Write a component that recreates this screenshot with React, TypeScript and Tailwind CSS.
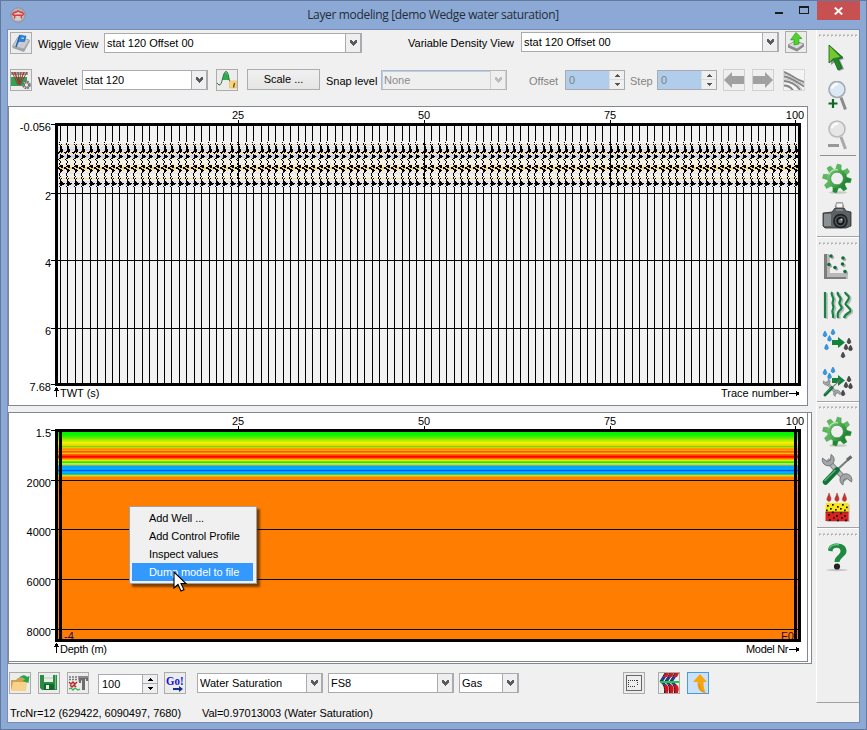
import React from "react";

const FONT = "'Liberation Sans', Arial, sans-serif";

/* ---------- small controls ---------- */

function Chevron({ muted = false }: { muted?: boolean }) {
  return (
    <svg width="9" height="7" viewBox="0 0 9 7" shapeRendering="crispEdges">
      <path d="M1 0h2v1h1v1h1v-1h1v-1h2v3h-1v1h-1v1h-1v1h-1v-1h-1v-1h-1v-1h-1z" fill={muted ? "#bdbdbd" : "#5a5a5a"} />
    </svg>
  );
}

function Combo({ text, className, muted = false }: { text: string; className: string; muted?: boolean }) {
  return (
    <div
      className={`flex h-5 shrink-0 items-stretch border ${muted ? "border-[#b4b6ba] bg-[#efefef] text-[#8a8a8a] shadow-[inset_1px_1px_0_#b5d0ee]" : "border-[#a9abb0] bg-white text-black"} ${className}`}
    >
      <span className="flex grow items-center whitespace-nowrap pl-[2px]">{text}</span>
      <span
        className={`flex w-4 items-center justify-center border border-y-0 ${muted ? "border-[#cfcfcf] bg-[#efefef]" : "border-[#a9abb0] bg-[#efefef]"}`}
      >
        <Chevron muted={muted} />
      </span>
    </div>
  );
}

function Spin({ text, className, muted = false }: { text: string; className: string; muted?: boolean }) {
  const tri = muted ? "#555" : "#000";
  return (
    <div className={`flex h-5 w-[60px] shrink-0 border border-[#a9abb0] ${muted ? "bg-[#b1cdec] text-[#808080]" : "bg-white text-black"} ${className}`}>
      <span className="flex grow items-center pl-[3px]">{text}</span>
      <span className={`flex w-[15px] flex-col border-l bg-[#efefef] ${muted ? "border-[#dcdcdc]" : "border-[#a9abb0]"}`}>
        <span className={`flex h-[9px] items-center justify-center border-b ${muted ? "border-[#dadada]" : "border-[#a9abb0]"}`}>
          <svg width="5" height="3" viewBox="0 0 5 3" shapeRendering="crispEdges"><path d="M2 0h1v1h1v1h1v1H0V2h1V1h1z" fill={tri} /></svg>
        </span>
        <span className="flex h-[9px] items-center justify-center">
          <svg width="5" height="3" viewBox="0 0 5 3" shapeRendering="crispEdges"><path d="M0 0h5v1H4v1H3v1H2V2H1V1H0z" fill={tri} /></svg>
        </span>
      </span>
    </div>
  );
}

function Tool({ className = "", children, tone = "border-[#acacac] bg-[#ececec]" }: { className?: string; children: React.ReactNode; tone?: string }) {
  return (
    <div className={`h-[22px] w-[22px] shrink-0 border ${tone} ${className}`}>
      <svg width="20" height="20" viewBox="1 1 20 20" className="block">{children}</svg>
    </div>
  );
}

function Label({ children, className = "" }: { children: React.ReactNode; className?: string }) {
  return <span className={`shrink-0 overflow-visible whitespace-nowrap leading-[14px] ${className}`}>{children}</span>;
}

/* ---------- title bar ---------- */

function TitleBar() {
  return (
    <div className="flex h-[28px] w-full shrink-0 items-start">
      <svg width="16" height="16" viewBox="0 0 16 16" className="ml-[9px] mt-[6px] shrink-0">
        <circle cx="8" cy="8" r="7.2" fill="#b9b3b4" stroke="#858a9c" strokeWidth=".8" />
        <circle cx="8" cy="9" r="4.500" fill="#d3cdcb" />
        <path d="M2 8 4 5.500 6.500 5 8 3.800 10 5 12.500 5.500 14 8M3 8.200H13M5 8l-.5 3.500M11 8l.5 3.500" fill="none" stroke="#dc3b3b" strokeWidth="1.400" />
      </svg>
      <div className="mt-[4px] w-[731px] shrink-0 pl-[83px] text-center text-[12px] leading-5 tracking-[-0.34px] text-[#252c38] [font-family:'Open_Sans','Noto_Sans',sans-serif]">
        <span className="whitespace-nowrap">Layer modeling [demo Wedge water saturation]</span>
      </div>
      <svg width="60" height="20" viewBox="757 1 60 20" className="shrink-0" shapeRendering="crispEdges">
        <path d="M775 12h8v2h-8z" fill="#1c1c1c" />
        <path d="M799 6h10v8h-10zM800 8v5h8V8z" fillRule="evenodd" fill="#1c1c1c" />
      </svg>
      <div className="flex h-[19px] w-[43px] shrink-0 items-center justify-center bg-[#c75050]">
        <svg width="9" height="8" viewBox="0 0 9 8"><path d="M.8.5 8.200 7.500M8.200.5.8 7.500" stroke="#fff" strokeWidth="1.900" /></svg>
      </div>
    </div>
  );
}

/* ---------- top tool rows ---------- */

function TopRows() {
  return (
    <>
      <div className="flex h-[38px] shrink-0 items-start">
        <Tool className="ml-[2px] mt-[2px]">
          <path d="M2.500 14 8 5l11.500 3L14 17z" fill="#c9ccd0" stroke="#9a9fa4" strokeWidth=".8" />
          <path d="M2.500 14v2l11.500 4 5.500-10V8L14 17z" fill="#9ea3a8" />
          <path d="M6 15 10 3" stroke="#1c63b0" strokeWidth="1.500" />
          <path d="M9.500 3.500c3-1 4 1 6.500.5L14.500 9.500c-2.500.5-4-1-6.500.5z" fill="#2c83dd" stroke="#1557a5" strokeWidth=".6" />
          <path d="M11.500 5.500h2.500v1.500h-2.500z" fill="#9fd3ff" />
        </Tool>
        <Label className="ml-[6px] mt-[7px] w-[66px]">Wiggle View</Label>
        <Combo className="mt-[3px] w-[258px]" text="stat 120 Offset 00" />
        <Label className="ml-[46px] mt-[6px] w-[113px]">Variable Density View</Label>
        <Combo className="mt-[2px] w-[258px]" text="stat 120 Offset 00" />
        <Tool className="ml-[6px] mt-[1px]">
          <path d="M3 14 10 10l9 3-7 5z" fill="#dcdcdc" stroke="#888" strokeWidth=".8" />
          <path d="M3 14v2.500l9 4 7-5V13l-7 5z" fill="#8a8a8a" />
          <path d="M11 1.500 17 7.500l-3.200.2.200 5.300-5 1V8.700L5.500 9z" fill="#4fd22b" stroke="#2e9d18" strokeWidth=".7" />
        </Tool>
      </div>
      <div className="flex h-[38px] shrink-0 items-start">
        <Tool className="ml-[2px] mt-[1px]">
          <path d="M1 3h17v3H1z" fill="#a89b93" />
          <path d="M1 8h16v9H1z" fill="#36a053" />
          <path d="M2 3 8 16M5 3l4 12M8 3l1 12M11 3 9 15M14 3 9 16M17 3 10 16" stroke="#7c3f36" strokeWidth=".9" />
          <path d="M4 3 9 15M14 3 9.500 15" stroke="#c22" strokeWidth=".8" />
          <circle cx="16.500" cy="16" r="3.400" fill="#ddd" stroke="#666" strokeWidth="1.700" strokeDasharray="1.700 1" />
          <circle cx="16.500" cy="16" r="2.200" fill="#e6e6e6" stroke="#707070" />
        </Tool>
        <Label className="ml-[6px] mt-[6px] w-[44px]">Wavelet</Label>
        <Combo className="mt-[2px] w-[126px]" text="stat 120" />
        <Tool className="ml-[8px] mt-[1px]">
          <path d="M6.500 11C8 1 11.500 1 13.500 11z" fill="#2eae4a" />
          <path d="M1 14 3 16C6.500 17 6.500 3 10 2.500 13 3 12.500 11 14 13" fill="none" stroke="#2c6b40" strokeWidth="1" />
          <path d="M13.500 12h7v7h-7z" fill="#fad47a" stroke="#e2b95b" strokeWidth=".6" />
          <path d="m18.500 14-1 4.500" stroke="#5c5026" strokeWidth="1.300" />
        </Tool>
        <div className="ml-[9px] mt-[1px] flex h-[21px] w-[73px] shrink-0 items-center justify-center border border-[#acacac] bg-gradient-to-b from-[#f0f0f0] to-[#e5e5e5]">
          Scale ...
        </div>
        <Label className="ml-[6px] mt-[6px] w-[55px]">Snap level</Label>
        <Combo muted className="mt-[2px] w-[126px]" text="None" />
        <Label className="ml-[22px] mt-[6px] w-[36px] text-[#838383]">Offset</Label>
        <Spin muted className="mt-[2px]" text="0" />
        <Label className="ml-[5px] mt-[6px] w-[27px] text-[#838383]">Step</Label>
        <Spin muted className="mt-[2px]" text="0" />
        <Tool className="ml-[6px] mt-[1px]" tone="border-[#d0d0d0] bg-[#efefef]">
          <path d="M1 11 9 3v4h12v8H9v4z" fill="#a0a0a0" />
        </Tool>
        <Tool className="ml-[7px] mt-[1px]" tone="border-[#d0d0d0] bg-[#efefef]">
          <path d="M21 11 13 3v4H1v8h12v4z" fill="#a0a0a0" />
        </Tool>
        <Tool className="ml-[9px] mt-[1px]" tone="border-[#d8d8d8] bg-[#f4f4f4]">
          <path d="M1 3C7 5 14 11 21 13M1 7.500C7 7.500 15 14 21 17.500M1 12c6 0 13 4 16 9M1 16.500c4 0 7 2 9 5" fill="none" stroke="#858585" strokeWidth="1.900" />
          <path d="M1 5.300C8 6 15 13 21 15.300M1 10c7 0 14 4 18 11" fill="none" stroke="#b0b0b0" strokeWidth=".9" />
        </Tool>
      </div>
    </>
  );
}

/* ---------- charts ---------- */

const traceX = Array.from({ length: 100 }, (_, i) => Math.round(60 + i * 7.426));
const numberedTraces = [
  { n: "25", x: 238 },
  { n: "50", x: 424 },
  { n: "75", x: 610 },
  { n: "100", x: 795 },
];

// y, height, colour of the density display behind the wiggles
const densityBands: [number, number, string][] = [
  [144, 1, "#f6e3ac"], [145, 2, "#ececf0"], [147, 1, "#dedee8"], [148, 1, "#eaeaee"], [149, 2, "#d9dae6"], [151, 1, "#f0e8dc"],
  [152, 1, "#f5d49a"], [153, 1, "#fae3b2"], [154, 1, "#e3e2e8"], [155, 1, "#d3d4e0"], [156, 2, "#cfd0e0"], [158, 1, "#e9e9ee"],
  [159, 1, "#f6ebc8"], [160, 4, "#f5f1e6"], [164, 1, "#f4e9c4"], [165, 1, "#eeeef0"], [166, 1, "#f6eccb"], [167, 2, "#fbd65a"],
  [169, 1, "#f1e4c8"], [170, 3, "#f0ebe4"], [173, 1, "#e6e6ec"], [174, 3, "#f4f0ea"], [177, 1, "#f5edd8"], [178, 1, "#f8e09a"],
  [179, 2, "#f1ecea"], [181, 1, "#dcdde8"], [182, 2, "#e5e6ef"], [184, 1, "#d6d8e6"], [185, 3, "#eceaec"],
];

// offset, y, width of each black pixel run in one seismic trace
const wiggle: [number, number, number][] = [
  [0, 141, 1], [-1, 143, 1], [-1, 144, 1], [1, 144, 1], [0, 145, 1], [0, 146, 2], [0, 147, 2], [0, 148, 2], [0, 149, 3], [0, 150, 3],
  [-1, 151, 4], [-3, 152, 3], [1, 152, 1], [-2, 153, 1], [0, 154, 1], [0, 155, 3], [0, 156, 4], [0, 157, 3], [-1, 158, 2], [-2, 159, 1],
  [-1, 160, 1], [0, 161, 1], [0, 162, 1], [-1, 163, 1], [-1, 164, 1], [0, 165, 3], [-1, 166, 4], [-3, 167, 2], [1, 167, 2], [-3, 168, 3],
  [-1, 169, 3], [0, 170, 3], [0, 171, 2], [0, 172, 1], [-1, 173, 1], [-1, 174, 1], [-1, 175, 1], [0, 176, 1], [-1, 177, 1], [-1, 178, 1],
  [1, 178, 1], [0, 179, 1], [0, 180, 1], [0, 181, 2], [0, 182, 3], [-1, 183, 6], [0, 184, 4], [0, 185, 2], [-1, 186, 1], [0, 187, 1],
];

function TraceNumbers({ y }: { y: number }) {
  return (
    <>
      {numberedTraces.map((t) => (
        <React.Fragment key={t.n}>
          <text x={t.x} y={y} textAnchor="middle">{t.n}</text>
          <rect x={t.x} y={y + 1} width="1" height="5" />
        </React.Fragment>
      ))}
    </>
  );
}

function SeismicChart() {
  return (
    <svg width="798" height="298" viewBox="9 107 798 298" className="block" fontFamily={FONT} fontSize="11" shapeRendering="crispEdges">
      <rect x="55" y="123" width="746" height="263" fill="#000" />
      <rect x="58" y="126" width="740" height="257" fill="#f2f2f2" />
      {densityBands.map(([y, h, c]) => <rect key={y} x="58" y={y} width="740" height={h} fill={c} />)}
      {traceX.map((x, i) => (
        <React.Fragment key={x}>
          <rect x={x} y="126" width="1" height="15" />
          <rect x={x} y="188" width="1" height="195" />
          {wiggle.map(([dx, y, w], k) => {
            const right = Math.min(x + dx + w, 798);
            const left = Math.max(x + dx, 58);
            return right > left ? <rect key={k} x={left} y={y - (i % 2 === 0 && k < 2 ? 1 : 0)} width={right - left} height="1" /> : null;
          })}
        </React.Fragment>
      ))}
      {[193, 260, 328].map((y) => <rect key={y} x="51" y={y} width="747" height="1" />)}
      <rect x="51" y="124" width="5" height="1" />
      <rect x="51" y="384" width="5" height="1" />
      <rect x="238" y="126" width="1" height="257" />
      <rect x="424" y="126" width="1" height="257" />
      <rect x="610" y="126" width="1" height="257" />
      <g textAnchor="end">
        <text x="51" y="131">-0.056</text>
        <text x="51" y="200">2</text>
        <text x="51" y="267">4</text>
        <text x="51" y="335">6</text>
        <text x="51" y="391">7.68</text>
      </g>
      <TraceNumbers y={119} />
      <path d="M56 387h1v1h1v2h1v1h-2v6h-1v-6h-2v-1h1v-2h1z" />
      <text x="60" y="397">TWT (s)</text>
      <text x="789" y="397" textAnchor="end">Trace number</text>
      <path d="M789 393h7v-2h1v1h2v3h-2v1h-1v-2h-7z" />
    </svg>
  );
}

// one colour per pixel row, starting under the upper frame line
const layerRows = [
  "#00f400", "#00f800", "#0cf400", "#22f000", "#3cee00", "#58ea00", "#78ea00", "#98ec00", "#aeee00", "#c4f200", "#e6f400",
  "#f8e800", "#d8e400", "#f4d400", "#40f000", "#f8c000", "#ffa000", "#ff8c00", "#ffa800", "#ff5800", "#ff7800", "#ffc400",
  "#ff6000", "#ff4000", "#ff0000", "#ff1800", "#ff7000", "#ffa800", "#e0f000", "#60e800", "#10e850", "#d0f000", "#ffc800",
  "#30c8c0", "#00a8ff", "#00a0ff", "#00b0ff", "#00a0ff", "#0050f0", "#00a0ff", "#00b4ff", "#00a8f0", "#18d090", "#d8e000", "#ffa800",
];

function LayerChart() {
  return (
    <svg width="798" height="248" viewBox="9 413 798 248" className="block" fontFamily={FONT} fontSize="11" shapeRendering="crispEdges">
      <rect x="55" y="429" width="746" height="213" fill="#000" />
      <rect x="58" y="432" width="740" height="207" fill="#ff7d00" />
      {layerRows.map((c, i) => <rect key={i} x="58" y={432 + i} width="740" height="1" fill={c} />)}
      {[480, 529, 579, 629].map((y) => <rect key={y} x="51" y={y} width="747" height="1" />)}
      <rect x="51" y="430" width="5" height="1" />
      <rect x="59" y="430" width="3" height="210" />
      <rect x="794" y="430" width="3" height="210" />
      <clipPath id="depthClip"><rect x="58" y="625" width="739" height="14" /></clipPath>
      <g clipPath="url(#depthClip)" fill="#280a50">
        <text x="58" y="640">1-4</text>
        <text x="781" y="640">F03</text>
      </g>
      <g textAnchor="end">
        <text x="51" y="437">1.5</text>
        <text x="51" y="487">2000</text>
        <text x="51" y="536">4000</text>
        <text x="51" y="586">6000</text>
        <text x="51" y="636">8000</text>
      </g>
      <TraceNumbers y={425} />
      <path d="M56 643h1v1h1v2h1v1h-2v6h-1v-6h-2v-1h1v-2h1z" />
      <text x="60" y="653" textLength="47">Depth (m)</text>
      <text x="746" y="653" textLength="42.500">Model Nr</text>
      <path d="M789 649h7v-2h1v1h2v3h-2v1h-1v-2h-7z" />
    </svg>
  );
}

function ContextMenu() {
  return (
    <div className="absolute left-[120px] top-[93px] w-[128px] border border-[#a0a0a0] bg-[#f0f0f0] py-[2px] pl-[2px] pr-[3px] tracking-[-0.08px] shadow-[3px_3px_2px_rgba(60,30,0,0.65)]">
      {["Add Well ...", "Add Control Profile", "Inspect values"].map((t) => (
        <div key={t} className="h-[18px] whitespace-nowrap pl-[17px] leading-[18px]">{t}</div>
      ))}
      <div className="h-[18px] whitespace-nowrap bg-[#3399ff] pl-[17px] leading-[18px] text-white">Dump model to file</div>
      <svg width="14" height="22" viewBox="0 0 14 22" className="absolute left-[43px] top-[64px]">
        <path d="M1 1v16l4-3.500 3 6.500 3-1.300-3-6.200h5z" fill="#fff" stroke="#000" strokeWidth="1.100" />
      </svg>
    </div>
  );
}

/* ---------- bottom rows ---------- */

function BottomRows() {
  return (
    <>
      <div className="mt-[8px] flex h-[30px] shrink-0 items-start">
        <Tool className="ml-[1px]">
          <path d="M2 8h5l2-2h7v11H2z" fill="#d3a052" />
          <path d="M2 19 4 10h14l-1 9z" fill="#f8d18a" />
          <path d="M10 6c3-4 7-3 8-1l2.500-1-1 7-6-2 2.500-1.500c-1-2-3-2-6-1.500z" fill="#26a548" />
        </Tool>
        <Tool className="ml-[7px]">
          <path d="M2 3h17v15H4l-2-2z" fill="#2b8a43" />
          <path d="M6 3h9v7H6z" fill="#e9eee9" />
          <path d="M6 6h9" stroke="#b9c9bb" />
          <path d="M6 12h10v6H6z" fill="#15662d" />
          <path d="M8 13h3v4H8z" fill="#e5eee7" />
          <path d="M17 3h1v14h-1z" fill="#70c184" />
        </Tool>
        <Tool className="ml-[7px]">
          <path d="M2 5h9M2 7.500h9" stroke="#777" strokeWidth="1.500" strokeDasharray="2 1" />
          <path d="m2 10 2 2 2-2 2 2 2-2M3 13l2 2 2-2 2 2" fill="none" stroke="#c22626" strokeWidth="1.500" />
          <path d="m2 17 2-1 2 2 2-2 3 2 2-1" fill="none" stroke="#3fae5b" strokeWidth="1.300" />
          <path d="M11 4h10v5h-2V7h-1v11h-3V9l-1-1v3h-2z" fill="#6d6d6d" />
          <path d="M11 5h10" stroke="#a8a8a8" />
        </Tool>
        <Spin className="ml-[9px] mt-[2px]" text="100" />
        <div className="ml-[6px] h-[22px] w-[22px] shrink-0 border border-[#acacac] bg-[#ececec]">
          <svg width="20" height="20" viewBox="1 1 20 20" className="block">
            <text x="2" y="13" fontSize="11.500" fontWeight="bold" fill="#1414dc" fontFamily="'Liberation Serif', serif" textLength="17.500" lengthAdjust="spacingAndGlyphs">Go!</text>
            <path d="M9 16h6v-2l4 3-4 3v-2H9z" fill="#142e8c" />
          </svg>
        </div>
        <Combo className="ml-[11px] mt-[1px] w-[126px]" text="Water Saturation" />
        <Combo className="ml-[5px] mt-[1px] w-[126px]" text="FS8" />
        <Combo className="ml-[5px] mt-[1px] w-[60px]" text="Gas" />
        <Tool className="ml-[104px]">
          <rect x="3.500" y="3.500" width="15" height="15" fill="#eee" stroke="#666" />
          <path d="M5.500 8v6M14.500 8v6M5 8.500h10M5 14.500h7" fill="none" stroke="#333" strokeDasharray="1 1" shapeRendering="crispEdges" />
        </Tool>
        <Tool className="ml-[13px]">
          <rect x="1" y="1" width="20" height="20" fill="#e8efe8" />
          {[0, 5, 10].map((o) => (
            <React.Fragment key={o}>
              <path d={`M${o + 7} 1h4l-2 4h-4z`} fill="#d8191e" />
              <path d={`M${o + 5} 5h3l-3 4.500 4 3.500h-3l-4-3.500z`} fill="#2038a8" />
              <path d={`M${o + 5} 13h4c2.500 3 1.500 5 1 8h-4c1-3 1-5-1-8z`} fill="#e01218" />
              <path d={`M${o + 7} 1 ${o + 2} 9.500c4 3 5 6 4.500 11.500`} fill="none" stroke="#101030" strokeWidth=".9" />
            </React.Fragment>
          ))}
          <path d="M2 9h19v2H2z" fill="#22cc35" />
        </Tool>
        <Tool className="ml-[7px]" tone="border-[#4a98e4] bg-[#c9e2fa]">
          <path d="M13 2 20 10h-3.500c0 4 .5 8 2.500 11-6-.5-9-4-8.500-11H6z" fill="#f6a511" />
          <path d="M12 12c0 4 2 7 5 8" fill="none" stroke="#df8a09" strokeWidth="1" />
        </Tool>
      </div>
      <div className="flex shrink-0 pl-[2px] pt-[4px] leading-[14px] tracking-[-0.04px]">
        <span className="w-[192px] shrink-0 whitespace-nowrap">TrcNr=12 (629422, 6090497, 7680)</span>
        <span className="whitespace-nowrap">Val=0.97013003 (Water Saturation)</span>
      </div>
    </>
  );
}

/* ---------- right tool bar ---------- */

function Slot({ className = "h-[38px]", children }: { className?: string; children: React.ReactNode }) {
  return (
    <div className={`flex shrink-0 items-center justify-start pl-[4px] ${className}`}>
      <svg width="32" height="32" viewBox="0 0 32 32">{children}</svg>
    </div>
  );
}

function Grip({ className = "h-[9px]" }: { className?: string }) {
  return (
    <div className={`flex shrink-0 justify-center pt-[4px] ${className}`}>
      <svg width="40" height="3" viewBox="0 0 40 3">
        <path d="M1 1.500h39" stroke="#b3b3b3" strokeWidth="2" strokeDasharray="2 2" />
        <path d="M2 2.500h38" stroke="#fff" strokeWidth="1" strokeDasharray="1 3" />
      </svg>
    </div>
  );
}

function Rule() {
  return <div className="h-[2px] w-full shrink-0 border-b border-t border-b-white border-t-[#a3a3a3]" />;
}

function Gear() {
  return (
    <>
      <ellipse cx="17" cy="29.500" rx="9" ry="1.300" fill="#c4cdc4" />
      <defs>
        <linearGradient id="gearShade" gradientUnits="userSpaceOnUse" x1="3" y1="4" x2="29" y2="20">
          <stop offset="0" stopColor="#8ed486" /><stop offset=".5" stopColor="#4fae53" /><stop offset="1" stopColor="#147428" />
        </linearGradient>
      </defs>
      <mask id="gearHole"><rect width="32" height="32" fill="#fff" /><circle cx="16" cy="15.500" r="6.300" fill="#000" /></mask>
      <g mask="url(#gearHole)">
        {[10, 55, 100, 145, 190, 235, 280, 325].map((a) => (
          <path
            key={a}
            d="M13 7 13.800 1.200 17.800 1.500 18.600 7z"
            transform={`rotate(${a} 16 15.500)`}
            fill={a > 60 && a < 200 ? "#1f8633" : "#5cb85c"}
            stroke="#3c9447"
            strokeWidth=".4"
          />
        ))}
        <circle cx="16" cy="15.500" r="10" fill="url(#gearShade)" />
      </g>
      <circle cx="16" cy="15.500" r="6.300" fill="none" stroke="#2e8840" strokeWidth=".6" />
      <path d="M7.500 12A9 9 0 0 1 17 6.800" fill="none" stroke="#b9eab0" strokeWidth="1.200" />
    </>
  );
}

function Lens({ cy, muted }: { cy: number; muted?: boolean }) {
  return (
    <>
      <path d={`M20 ${cy + 8} 24.500 ${cy + 20}`} stroke={muted ? "#a9a9a9" : "#8b8b8b"} strokeWidth="3" />
      <circle cx="16" cy={cy} r="8" fill={muted ? "#e6e6e6" : "#dbe9f6"} stroke={muted ? "#bcbcbc" : "#a5abb3"} strokeWidth="1.600" />
      <path d={`M11 ${cy - 1}a5 5 0 0 1 6-4`} stroke="#fff" strokeWidth="2" fill="none" />
    </>
  );
}

function Drops({ withTools = false }: { withTools?: boolean }) {
  const drop = "c1.500 2.500 2 3.500 1.800 4.500-.5 1.500-3.200 1.500-3.600 0-.2-1 .2-2 1.800-4.500z";
  const water = withTools ? [[4, 3], [12, 1], [8.5, 7]] : [[4, 3], [12, 1], [8.5, 7.5], [5.5, 16]];
  return (
    <g>
      {water.map(([x, y]) => (
        <path key={x} d={`M${x} ${y}${drop}`} fill="#2f9be8" stroke="#1c6cae" strokeWidth=".5" />
      ))}
      <path d="M11 12h6V9l7 5.500-7 5.500v-3h-6z" fill="#12833a" />
      {[[28, 10], [25, 16], [29.5, 17], [22, 24]].map(([x, y]) => (
        <path key={x} d={`M${x} ${y}${drop}`} fill="#4c4c4c" stroke="#222" strokeWidth=".5" />
      ))}
    </g>
  );
}

function CrossedTools() {
  return (
    <>
      <path d="m6 6 19 20" stroke="#6f7376" strokeWidth="5" />
      <path d="m6 6 19 20" stroke="#b5b8ba" strokeWidth="3.400" />
      <path d="M1.500 4a6 6 0 1 0 8.500-3.500L9.500 6 6 7.500z" fill="#a2a6a8" stroke="#65696c" strokeWidth=".8" />
      <path d="M30.500 28a6 6 0 1 0-8.500 3L22.500 26l3.500-1.500z" fill="#a2a6a8" stroke="#65696c" strokeWidth=".8" />
      <path d="M29 4 17 15" stroke="#777b7e" strokeWidth="2" />
      <path d="M30.500 2.500 26 6" stroke="#65696c" strokeWidth="3" />
      <path d="M16 16 4.500 28" stroke="#14713a" strokeWidth="5.500" strokeLinecap="round" />
      <path d="M14.500 16 3.500 27" stroke="#58b078" strokeWidth="1.500" />
    </>
  );
}

function SideBar() {
  const redDots = [[8, 22], [12, 19.5], [16, 23], [20, 20.5], [24, 23], [9, 27], [13, 25], [17, 27.5], [21, 25], [25, 27.5]];
  const yellowDots = [[7, 13], [12, 12], [17, 14], [22, 12], [26, 14.5], [10, 16], [15, 17], [20, 16], [24, 17.5], [6, 17.5]];
  return (
    <div className="flex h-[673px] w-[43px] shrink-0 flex-col border-b border-l border-b-[#a0a0a0] border-l-white bg-[#efefef]">
      <Grip className="h-[10px]" />
      <Slot>
        <path d="M10 4v18l4-3 4 9 5-2-4-9 4-1z" fill="#555" opacity=".6" />
        <path d="M8 2v18l4.500-3.500L17 27l4-2-4-9 5-1.500z" fill="#1d8a28" stroke="#145c18" strokeWidth=".8" />
        <path d="M8.500 3v16l4-4 6.500-1z" fill="#79c62f" />
      </Slot>
      <Slot><Lens cy={8.5} /><path d="M12 18v9M7.500 22.500h9" stroke="#0b6b25" strokeWidth="2.200" /></Slot>
      <Slot><Lens cy={10} muted /><path d="M7 26.500h11" stroke="#989898" strokeWidth="3" /></Slot>
      <div className="mx-[3px] h-[6px] shrink-0 pt-px"><div className="h-px bg-[#8f8f8f]" /></div>
      <Slot><Gear /></Slot>
      <Slot>
        <path d="M14 6 15.500 1.500h6L23 6z" fill="#c4c4c4" stroke="#777" strokeWidth=".6" />
        <path d="M16 3h5v4h-5z" fill="#f4f4f4" />
        <path d="M2 12 11 11l3-4h9l2 3 5 1v14l-5 2H4l-2-2z" fill="#5b6062" stroke="#2a2a2a" strokeWidth=".8" />
        <path d="M3 13h7v12H3z" fill="#8b9092" />
        <path d="M15 9h7" stroke="#aaa" />
        <circle cx="19.500" cy="20" r="7.300" fill="#1f2223" /><circle cx="19.500" cy="20" r="5.600" fill="#565b5e" />
        <circle cx="19.500" cy="20" r="4.200" fill="#151515" /><circle cx="19.500" cy="20" r="2.300" fill="#68747e" /><circle cx="20.500" cy="18.500" r="1.100" fill="#ccd4dc" />
      </Slot>
      <Rule />
      <Grip />
      <Slot className="h-[39px]">
        <path d="M5 4h4v19h18v5H8l-3-2z" fill="#777" opacity=".4" />
        <path d="M3 3h3v23h19v2H3z" fill="#7d7d7d" /><path d="M6 3h2v19h17l1 4H6z" fill="#b9b9b9" />
        {[[10, 5], [22, 7], [8, 13.5], [14, 16.5], [21.5, 13], [24, 20.5]].map(([x, y]) => (
          <React.Fragment key={x}><circle cx={x + 1.5} cy={y + 1.5} r="1.700" fill="#aaa" /><circle cx={x} cy={y} r="1.800" fill="#126b32" /></React.Fragment>
        ))}
      </Slot>
      <Slot>
        {["M4 3v26", "M11 3c-2 4 3 5 1 9s2 5 0 8 1 5 0 9", "M17 3c-2 4 5 5 2 9s4 5 1 8-4 4-3 9", "M24 3c1 4 6 3 3 8s-4 3 1 8-4 4-5 10"].map((d) => (
          <React.Fragment key={d}><path d={d} fill="none" stroke="#b4bcb6" strokeWidth="2.500" transform="translate(1.500 1)" /><path d={d} fill="none" stroke="#168343" strokeWidth="2.200" /></React.Fragment>
        ))}
      </Slot>
      <Slot className="h-[39px]"><Drops /></Slot>
      <Slot>
        <Drops withTools />
        <g transform="translate(1.500 12.500) scale(.58)"><CrossedTools /></g>
      </Slot>
      <div className="h-0 shrink-0"><Rule /></div>
      <Grip className="mt-px h-[11px]" />
      <Slot><Gear /></Slot>
      <Slot><CrossedTools /></Slot>
      <Slot>
        {[8, 16, 23.5].map((x) => (
          <path key={x} d={`M${x} 1c.8 3 2.500 4.500 1.900 7-.8 1.800-3.200 1.800-4-.3-.4-1.800 1.400-3.200 2.100-6.700z`} fill="#c9302c" stroke="#9c4a46" strokeWidth=".6" />
        ))}
        <path d="M6 12.500h22.500v17.500H6z" fill="#8b8b8b" opacity=".5" />
        <path d="M4.500 11h23v9h-23z" fill="#fbe416" /><path d="M4.500 20h23v9h-23z" fill="#dc2020" />
        <path d="M4.500 20h23" stroke="#463d10" strokeWidth=".8" />
        <g fill="#161616">
          {redDots.map(([x, y]) => <rect key={`${x}-${y}`} x={x - 1} y={y} width="1.800" height="1.800" />)}
          {yellowDots.map(([x, y]) => <rect key={`${x}-${y}`} x={x - 1} y={y} width="1.700" height="1.700" />)}
        </g>
      </Slot>
      <Rule />
      <Grip />
      <Slot>
        <ellipse cx="16" cy="29" rx="11" ry="1.200" fill="#c7c7c7" />
        <path d="M7 9.500C7.500 4 11.500 2.500 16 2.500c6 0 9.500 3 9.500 7.500 0 5-6 6-7 11h-5c0-6 6-7 6-11 0-2.200-1.500-3.200-4-3.200-2.700 0-3.800 1.200-4 3.700z" fill="#1c8a3f" />
        <path d="M8.500 7.500C10 4 14 3.300 18 3.800" stroke="#6cc486" strokeWidth="1.300" fill="none" />
        <circle cx="16" cy="25.500" r="3.100" fill="#202321" />
      </Slot>
    </div>
  );
}

/* ---------- window ---------- */

export default function App() {
  return (
    <div className="h-[730px] w-[867px] overflow-hidden border border-[#62789c] bg-[#8ca9d5] text-[11px] text-black [font-family:'Liberation_Sans',Arial,sans-serif]">
      <TitleBar />
      <div className="mx-[6px] flex h-[694px] w-[853px] border border-[#768eb5] bg-[#f0f0f0]">
        <div className="flex w-[808px] shrink-0 flex-col">
          <TopRows />
          <div className="h-[300px] w-[800px] shrink-0 border border-[#828790] bg-white">
            <SeismicChart />
          </div>
          <div className="mt-[6px] h-[252px] w-[804px] shrink-0 border border-[#828790] bg-white">
            <div className="relative h-[249px] w-[799px] border-b border-r border-[#828790]">
              <LayerChart />
              <ContextMenu />
            </div>
          </div>
          <BottomRows />
        </div>
        <SideBar />
      </div>
    </div>
  );
}
